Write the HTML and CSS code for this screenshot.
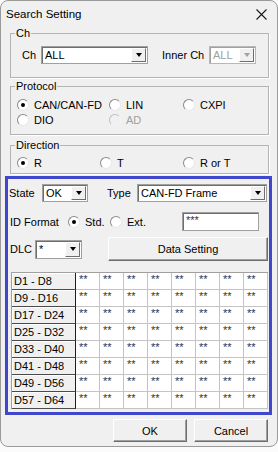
FILE: index.html
```html
<!DOCTYPE html>
<html lang="en">
<head>
  <meta charset="UTF-8">
  <meta name="viewport" content="width=device-width, initial-scale=1.0">
  <title>Search Setting</title>
  <link rel="stylesheet" href="styles.css">
</head>
<body>
  <div class="window">
    <!-- Barra de titulo -->
    <div class="titlebar">
      <span class="title">Search Setting</span>
      <svg class="close" width="11" height="11" viewBox="0 0 11 11">
        <path d="M0.5 0.5 L10.5 10.5 M10.5 0.5 L0.5 10.5" stroke="#1a1a1a" stroke-width="1.1" fill="none"/>
      </svg>
    </div>

    <!-- Canal -->
    <fieldset class="group group-ch">
      <legend>Ch</legend>
      <div class="row">
        <span class="lbl lbl-ch">Ch</span>
        <div class="combo combo-ch"><span class="val">ALL</span><span class="drop"></span></div>
        <span class="lbl lbl-inner">Inner Ch</span>
        <div class="combo combo-inner disabled"><span class="val">ALL</span><span class="drop"></span></div>
      </div>
    </fieldset>

    <!-- Protocolo -->
    <fieldset class="group group-protocol">
      <legend>Protocol</legend>
      <div class="radios radios-protocol">
        <label class="radio checked"><span class="dot"></span>CAN/CAN-FD</label>
        <label class="radio"><span class="dot"></span>LIN</label>
        <label class="radio"><span class="dot"></span>CXPI</label>
        <label class="radio"><span class="dot"></span>DIO</label>
        <label class="radio disabled"><span class="dot"></span>AD</label>
      </div>
    </fieldset>

    <!-- Direccion -->
    <fieldset class="group group-direction">
      <legend>Direction</legend>
      <div class="radios radios-direction">
        <label class="radio checked"><span class="dot"></span>R</label>
        <label class="radio"><span class="dot"></span>T</label>
        <label class="radio"><span class="dot"></span>R or T</label>
      </div>
    </fieldset>

    <!-- Marco azul con filtros y datos -->
    <div class="frame">
      <div class="row row-state">
        <span class="lbl lbl-state">State</span>
        <div class="combo combo-state"><span class="val">OK</span><span class="drop"></span></div>
        <span class="lbl lbl-type">Type</span>
        <div class="combo combo-type"><span class="val">CAN-FD Frame</span><span class="drop"></span></div>
      </div>

      <div class="row row-id">
        <span class="lbl lbl-id">ID Format</span>
        <label class="radio checked radio-std"><span class="dot"></span>Std.</label>
        <label class="radio radio-ext"><span class="dot"></span>Ext.</label>
        <div class="textbox">***</div>
      </div>

      <div class="row row-dlc">
        <span class="lbl lbl-dlc">DLC</span>
        <div class="combo combo-dlc"><span class="val">*</span><span class="drop"></span></div>
        <button class="btn btn-data">Data Setting</button>
      </div>

      <div class="grid" id="data-grid"></div>
    </div>

    <div class="footer">
      <button class="btn btn-foot">OK</button>
      <button class="btn btn-foot">Cancel</button>
    </div>
  </div>

  <script>
    // Llenar la tabla de datos D1 - D64
    const grid = document.getElementById("data-grid");
    for (let r = 0; r < 8; r++) {
      const head = document.createElement("div");
      head.className = "cell-head";
      head.textContent = `D${r * 8 + 1} - D${r * 8 + 8}`;
      grid.appendChild(head);
      for (let c = 0; c < 8; c++) {
        const cell = document.createElement("div");
        cell.className = "cell";
        cell.textContent = "**";
        grid.appendChild(cell);
      }
    }
  </script>
</body>
</html>
```

FILE: styles.css
```css
body {
    margin: 0;
    background: #fbfbfb;
    font-family: "Liberation Sans", Arial, sans-serif;
    font-size: 11px;
    color: #000;
}

.window {
    width: 278px;
    height: 447px;
    box-sizing: border-box;
    border: 1px solid #9a9a9a;
    border-radius: 8px;
    background: #f0f0f0;
    overflow: hidden;
}

.titlebar {
    height: 26px;
    display: flex;
    align-items: center;
    justify-content: space-between;
    padding: 0 10px 0 5px;
}

.title {
    font-size: 11.5px;
}

/* Grupos */
.group {
    margin: 0 0 0 9px;
    width: 259px;
    box-sizing: border-box;
    border: 1px solid #b4b4b4;
    box-shadow: 1px 1px 0 #fff;
    padding: 0 4px;
    min-width: 0;
}

.group legend {
    padding: 0 1px;
    line-height: 13px;
}

.group-ch {
    padding-top: 6px;
    padding-bottom: 13px;
}

.group-protocol {
    margin-top: 2px;
    padding-top: 4px;
    padding-bottom: 7px;
}

.group-direction {
    margin-top: 4px;
    padding-top: 3px;
    padding-bottom: 3px;
}

.row {
    display: flex;
    align-items: center;
}

.lbl {
    flex: none;
}

.lbl-ch { margin-left: 7px; width: 19px; }
.lbl-inner { margin-left: 14px; width: 47px; }

/* Combos */
.combo {
    flex: none;
    display: flex;
    height: 18px;
    box-sizing: border-box;
    border: 1px solid #a0a0a0;
    box-shadow: inset 1px 1px 0 #6e6e6e;
    background: #fff;
}

.combo .val {
    flex: 1;
    padding: 1px 0 0 3px;
    line-height: 15px;
    white-space: nowrap;
    overflow: hidden;
}

.combo .drop {
    flex: none;
    width: 15px;
    margin: 1px 1px 1px 0;
    box-sizing: border-box;
    background: #f0f0f0;
    border: 1px solid;
    border-color: #fff #6e6e6e #6e6e6e #fff;
    display: flex;
    align-items: center;
    justify-content: center;
}

.combo .drop::after {
    content: "";
    border-left: 3.5px solid transparent;
    border-right: 3.5px solid transparent;
    border-top: 4px solid #000;
}

.combo.disabled .val { color: #a0a0a0; }
.combo.disabled { border-color: #b8b8b8; box-shadow: inset 1px 1px 0 #a0a0a0; }
.combo.disabled .drop::after { border-top-color: #a0a0a0; }

.combo-ch { width: 107px; }
.combo-inner { width: 47px; }
.combo-state { width: 46px; }
.combo-type { width: 130px; }
.combo-dlc { width: 47px; height: 19px; }

/* Radios */
.radios {
    display: grid;
    grid-auto-rows: 15px;
    margin-left: 2px;
}

.radios-protocol { grid-template-columns: 92px 74px auto; }
.radios-direction { grid-template-columns: 83px 83px auto; }

.radio {
    display: flex;
    align-items: center;
    white-space: nowrap;
}

.radio .dot {
    flex: none;
    width: 12px;
    height: 12px;
    box-sizing: border-box;
    border-radius: 50%;
    border: 1px solid;
    border-color: #8a8a8a #e8e8e8 #e8e8e8 #8a8a8a;
    background: #fff;
    margin-right: 5px;
    display: flex;
    align-items: center;
    justify-content: center;
}

.radio.checked .dot::after {
    content: "";
    width: 4px;
    height: 4px;
    border-radius: 50%;
    background: #000;
}

.radio.disabled { color: #a0a0a0; }
.radio.disabled .dot { background: #f0f0f0; border-color: #c0c0c0 #f4f4f4 #f4f4f4 #c0c0c0; }

/* Marco azul */
.frame {
    margin: 2px 0 0 4px;
    width: 267px;
    box-sizing: border-box;
    border: 3px solid #3f48cc;
    padding: 5px 0 3px 1px;
}

.row-state { height: 18px; }
.lbl-state { width: 33px; }
.lbl-type { margin-left: 19px; width: 30px; }

.row-id { margin-top: 10px; height: 19px; }
.lbl-id { margin-left: 1px; width: 58px; }
.radio-std { width: 42px; flex: none; }
.radio-ext { width: 72px; flex: none; }

.textbox {
    flex: none;
    width: 77px;
    height: 19px;
    box-sizing: border-box;
    border: 1px solid #a0a0a0;
    box-shadow: inset 1px 1px 0 #6e6e6e;
    background: #fff;
    padding: 2px 0 0 3px;
    line-height: 11px;
    color: #333;
}

.row-dlc { margin-top: 6px; height: 24px; }
.lbl-dlc { margin-left: 1px; width: 25px; }

/* Botones */
.btn {
    font-family: inherit;
    font-size: 11px;
    color: #000;
    background: #f0f0f0;
    border: 1px solid;
    border-color: #fff #6e6e6e #6e6e6e #fff;
    box-shadow: inset -1px -1px 0 #a0a0a0;
    padding: 0;
    box-sizing: border-box;
}

.btn-data {
    margin-left: 26px;
    width: 160px;
    height: 24px;
}

/* Tabla de datos */
.grid {
    margin: 11px 0 0 2px;
    display: grid;
    grid-template-columns: 64px repeat(8, 24px);
    grid-auto-rows: 17px;
    width: max-content;
    border-left: 1px solid #a0a0a0;
    border-top: 1px solid #a0a0a0;
}

.cell-head {
    background: #f0f0f0;
    border-right: 1px solid #1e1e1e;
    border-bottom: 1px solid #4a4a4a;
    box-shadow: inset 1px 1px 0 #fff;
    padding-left: 2px;
    line-height: 16px;
    white-space: nowrap;
}

.cell {
    background: #fff;
    border-right: 1px solid #c4c4c4;
    border-bottom: 1px solid #c4c4c4;
    padding-left: 3px;
    line-height: 12px;
    color: #333;
}

.footer {
    display: flex;
    justify-content: flex-end;
    gap: 7px;
    padding-right: 9px;
    margin-top: 4px;
}

.btn-foot {
    width: 74px;
    height: 23px;
}
```
